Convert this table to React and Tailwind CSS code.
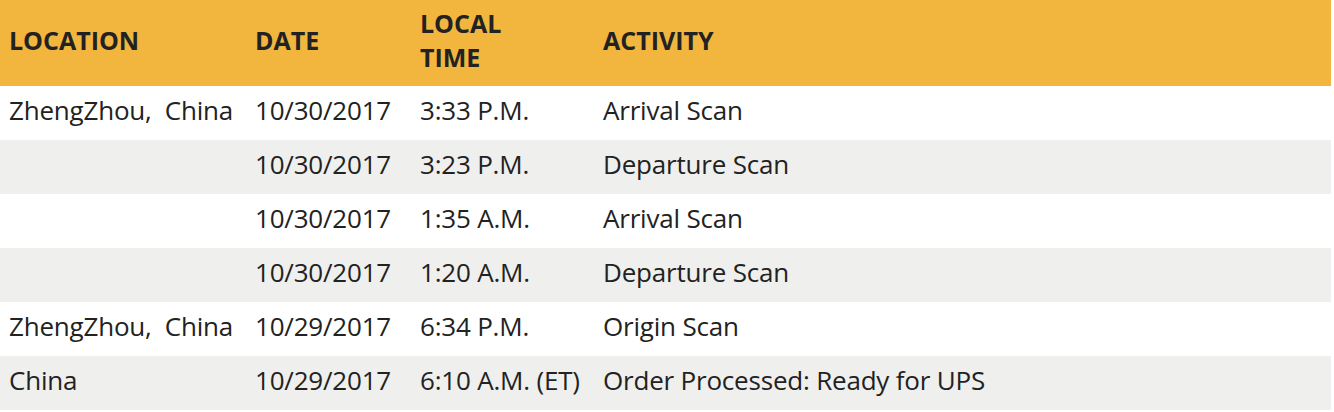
const rows = [
  { location: "ZhengZhou,  China", date: "10/30/2017", time: "3:33 P.M.", activity: "Arrival Scan" },
  { location: "", date: "10/30/2017", time: "3:23 P.M.", activity: "Departure Scan" },
  { location: "", date: "10/30/2017", time: "1:35 A.M.", activity: "Arrival Scan" },
  { location: "", date: "10/30/2017", time: "1:20 A.M.", activity: "Departure Scan" },
  { location: "ZhengZhou,  China", date: "10/29/2017", time: "6:34 P.M.", activity: "Origin Scan" },
  { location: "China", date: "10/29/2017", time: "6:10 A.M. (ET)", activity: "Order Processed: Ready for UPS" },
];

const App = () => {
  return (
    <div className="w-[1331px] bg-white text-[#222] font-['Open_Sans',sans-serif]">
      <table className="w-full table-fixed border-collapse text-left">
        <colgroup>
          <col className="w-[246px]" />
          <col className="w-[165px]" />
          <col className="w-[183px]" />
          <col />
        </colgroup>
        <thead>
          <tr className="h-[86px] bg-[#f2b53e] text-[25px] leading-[34px] font-bold">
            <th className="pl-[9px] pb-[6px] align-middle">LOCATION</th>
            <th className="pl-[9px] pb-[6px] align-middle">DATE</th>
            <th className="pl-[9px] pb-[6px] align-middle">
              LOCAL
              <br />
              TIME
            </th>
            <th className="pl-[9px] pb-[6px] align-middle">ACTIVITY</th>
          </tr>
        </thead>
        <tbody className="text-[26px] tracking-[-0.2px]">
          {rows.map((row, i) => (
            <tr key={i} className={`h-[54px] ${i % 2 === 1 ? "bg-[#efefee]" : "bg-white"}`}>
              <td className="pl-[9px] pb-[5px] whitespace-pre">{row.location}</td>
              <td className="pl-[9px] pb-[5px]">{row.date}</td>
              <td className="pl-[9px] pb-[5px] whitespace-nowrap">{row.time}</td>
              <td className="pl-[9px] pb-[5px]">{row.activity}</td>
            </tr>
          ))}
        </tbody>
      </table>
    </div>
  );
};

export default App;
